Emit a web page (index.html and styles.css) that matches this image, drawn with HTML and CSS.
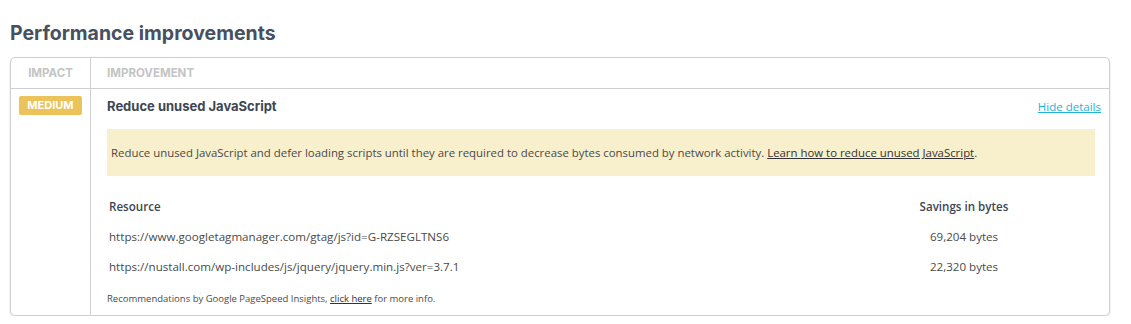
FILE: index.html
```html
<!DOCTYPE html>
<html>
<head>
<meta charset="utf-8">
<link rel="stylesheet" href="styles.css">
</head>
<body>
<h2 class="title">Performance improvements</h2>
<div class="table">
  <div class="head">
    <div class="col-impact">Impact</div>
    <div class="col-improve">Improvement</div>
  </div>
  <div class="row">
    <div class="cell-impact"><span class="badge">Medium</span></div>
    <div class="cell-improve">
      <div class="row-title">
        <span class="name">Reduce unused JavaScript</span>
        <a class="toggle" href="#">Hide details</a>
      </div>
      <div class="desc">Reduce unused JavaScript and defer loading scripts until they are required to decrease bytes consumed by network activity. <a href="#">Learn how to reduce unused JavaScript</a>.</div>
      <div class="res">
        <div class="res-row res-head"><span class="url">Resource</span><span class="bytes">Savings in bytes</span></div>
        <div class="res-row"><span class="url">https://www.googletagmanager.com/gtag/js?id=G-RZSEGLTNS6</span><span class="bytes">69,204 bytes</span></div>
        <div class="res-row"><span class="url">https://nustall.com/wp-includes/js/jquery/jquery.min.js?ver=3.7.1</span><span class="bytes">22,320 bytes</span></div>
      </div>
      <div class="note">Recommendations by Google PageSpeed Insights, <a href="#">click here</a> for more info.</div>
    </div>
  </div>
</div>
</body>
</html>
```
FILE: styles.css
```css
* { box-sizing: border-box; }
body {
  margin: 0;
  padding: 0 21px 0 10px;
  font-family: "Open Sans", "Noto Sans", sans-serif;
  color: #444;
  background: #fff;
}
.title {
  font-family: Inter, sans-serif;
  font-weight: 700;
  font-size: 19.5px;
  color: #465060;
  margin: 0;
  padding-top: 20px;
  height: 57px;
  line-height: 26px;
}
.table {
  border: 1px solid #cfcfcf;
  border-radius: 5px;
  box-shadow: 0 1px 2px rgba(0,0,0,0.15);
  overflow: hidden;
}
.head {
  display: flex;
  height: 31px;
  border-bottom: 1px solid #cfcfcf;
  font-family: Inter, sans-serif;
  font-weight: 700;
  font-size: 11.5px;
  text-transform: uppercase;
  color: #c4c4c4;
  line-height: 31px;
}
.col-impact, .cell-impact {
  width: 80px;
  flex: none;
  border-right: 1px solid #cfcfcf;
}
.col-impact { text-align: center; }
.col-improve { padding-left: 16px; }
.row { display: flex; }
.cell-impact { padding: 7px 0 0 8px; }
.badge {
  display: block;
  width: 63px;
  height: 19px;
  line-height: 19px;
  text-align: center;
  background: #ecc35a;
  color: #fff;
  border-radius: 2px;
  font-family: Inter, sans-serif;
  font-weight: 700;
  font-size: 11px;
  text-transform: uppercase;
}
.cell-improve {
  flex: 1;
  padding: 7px 8px 10px 16px;
}
.row-title {
  display: flex;
  justify-content: space-between;
  align-items: center;
  height: 20px;
}
.name {
  font-family: Inter, sans-serif;
  font-weight: 700;
  font-size: 13px;
  color: #3e4653;
}
.toggle {
  color: #1fb3d6;
  font-size: 11.5px;
  text-decoration: underline;
}
.desc {
  margin: 13px 6px 0 0;
  background: #f8efcc;
  padding: 15px 4px 15px 4px;
  font-size: 11.4px;
  line-height: 17px;
  color: #4a4a4a;
}
.desc a { color: #333; }
.res { margin: 15px 6px 0 0; padding-left: 2px; }
.res-row {
  display: flex;
  height: 30px;
  align-items: center;
  font-size: 11.6px;
  color: #4a4a4a;
}
.res-head { font-weight: 600; color: #3e4653; }
.url { flex: 1; }
.bytes { width: 200px; text-align: center; padding-right: 62px; }
.note {
  margin-top: 11px;
  font-size: 9.5px;
  color: #4a4a4a;
}
.note a { color: #333; }
```
